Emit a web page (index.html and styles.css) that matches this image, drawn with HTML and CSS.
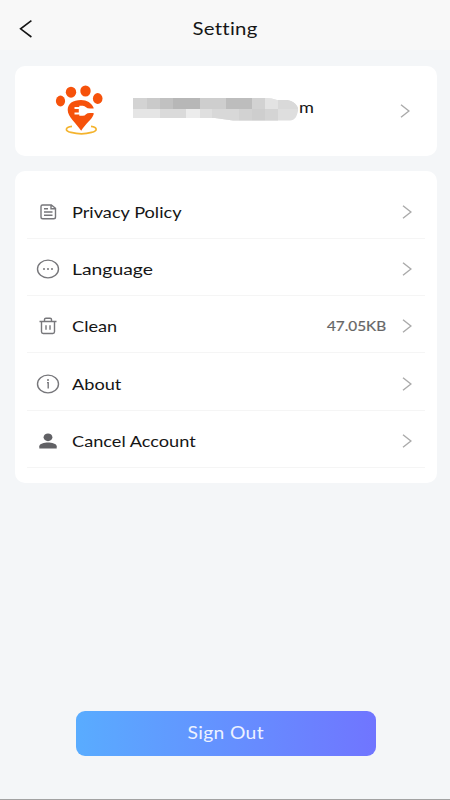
FILE: index.html
```html
<!DOCTYPE html>
<html lang="en">
<head>
<meta charset="utf-8">
<title>Setting</title>
<link rel="stylesheet" href="styles.css">
</head>
<body>
<header class="bar">
  <svg class="back" width="14" height="20" viewBox="0 0 14 20"><path d="M12.4 1.6 1.6 9.8l10.8 8.2"/></svg>
  <h1 class="title"><span class="wide">Setting</span></h1>
</header>
<main class="content">
  <section class="card profile">
    <svg class="logo" width="50" height="52" viewBox="0 0 50 52">
      <g fill="#f6520b">
        <ellipse cx="5.500" cy="16" rx="4.600" ry="5.400"/>
        <ellipse cx="16" cy="7.200" rx="5.200" ry="5.500"/>
        <ellipse cx="30.500" cy="6" rx="5.200" ry="5.500"/>
        <ellipse cx="42.700" cy="13.500" rx="4.800" ry="5.400"/>
        <path d="M26.200 45.800C21 38 12.700 31.500 12.700 25C12.700 18.500 18 15 26 15C32 15 36.500 18 38.600 22.800V29.500C37 34.500 30.500 38.500 26.200 45.800Z"/>
      </g>
      <path d="M19.500 22h4.800v-1.200h3.500q2 0 3.200 1.500q1.200 1.300 4 1.300h4.600v4.400H35q-2.800 0-4 1.200q-1.200 1.500-3.200 1.500h-3.500v-1.300h-4.800v-1.900h4.300v-3.500h-4.300z" fill="#fff"/>
      <path d="M17 41.300C10 42 9.500 46 16 47.400C22 49 31 49 36.500 47.400C43 46 42.500 42 36 41.300" fill="none" stroke="#f4b32d" stroke-width="1.700"/>
    </svg>
    <div class="account">
      <svg class="mask" width="166" height="24" viewBox="0 0 166 24">
        <clipPath id="smudge"><path d="M0 1H132Q139 1 144 3H154C161 4 166 9 165 14C164 19 162 23.500 157 23.500H100Q91 22 82 21H0Z"/></clipPath>
        <g clip-path="url(#smudge)">
          <path fill="#dedede" d="M0 0h166v24H0z"/>
          <path fill="#d3d3d3" d="M0 1h14v11H0z"/><path fill="#cacaca" d="M14 1h13v11H14z"/><path fill="#c1c1c1" d="M27 1h13v11H27z"/>
          <path fill="#b7b7b7" d="M40 1h27v11H40z"/><path fill="#cecece" d="M67 1h26v11H67z"/><path fill="#bdbdbd" d="M93 1h26v11H93z"/>
          <path fill="#d2d2d2" d="M119 1h13v11h-13z"/><path fill="#e3e3e3" d="M132 1h13v11h-13z"/><path fill="#d9d9d9" d="M145 1h21v11h-21z"/>
          <path fill="#e5e5e5" d="M0 12h27v9H0z"/><path fill="#dadada" d="M27 12h26v9H27z"/><path fill="#ececec" d="M53 12h14v9H53z"/>
          <path fill="#dfdfdf" d="M67 12h12v12H67z"/><path fill="#d8d8d8" d="M79 12h27v12H79z"/><path fill="#d2d2d2" d="M106 12h13v12h-13z"/>
          <path fill="#cecece" d="M119 12h13v12h-13z"/><path fill="#d4d4d4" d="M132 12h13v12h-13z"/>
        </g>
      </svg>
      <span class="tail wide">m</span>
    </div>
    <svg class="chevron" width="10" height="14" viewBox="0 0 10 14"><path d="m1 .8 7.900 6.200L1 13.200"/></svg>
  </section>

  <ul class="card menu">
    <li class="row">
      <svg class="icon" width="24" height="20" viewBox="0 0 24 20"><path d="M6.500 3h8.800l4.200 3.300V15q0 1.800-1.800 1.800H6.800Q5 16.800 5 15V4.500Q5 3 6.500 3zM15 3v3.700h4.500M8 6.800h4M8 10h8.500M8 13.200h8.500"/></svg>
      <span class="label"><span class="wide">Privacy Policy</span></span>
      <svg class="chevron" width="10" height="14" viewBox="0 0 10 14"><path d="m1 .8 7.900 6.200L1 13.200"/></svg>
    </li>
    <li class="row">
      <svg class="icon" width="24" height="20" viewBox="0 0 24 20"><ellipse cx="12" cy="10" rx="10.500" ry="8.900"/><path class="dots" d="M7 9.300h2v1.500H7zM11 9.300h2v1.500h-2zM15 9.300h2v1.500h-2z"/></svg>
      <span class="label"><span class="wide wider">Language</span></span>
      <svg class="chevron" width="10" height="14" viewBox="0 0 10 14"><path d="m1 .8 7.900 6.200L1 13.200"/></svg>
    </li>
    <li class="row">
      <svg class="icon" width="24" height="20" viewBox="0 0 24 20"><path d="M3.500 5.500h17M8.500 5.200V3.600q0-1.400 1.400-1.400h4.200q1.400 0 1.400 1.400v1.600M5.500 5.500v10.300q0 1.700 1.700 1.700h9.600q1.700 0 1.700-1.700V5.500M10 9.300v4.500M14 9.300v4.500"/></svg>
      <span class="label"><span class="wide">Clean</span></span>
      <span class="value"><span class="wide">47.05KB</span></span>
      <svg class="chevron" width="10" height="14" viewBox="0 0 10 14"><path d="m1 .8 7.900 6.200L1 13.200"/></svg>
    </li>
    <li class="row">
      <svg class="icon" width="24" height="20" viewBox="0 0 24 20"><ellipse cx="12" cy="10" rx="10.500" ry="8.900"/><path d="M11 8.600h1.200v5.800"/><circle class="dots" cx="12" cy="6" r="1"/></svg>
      <span class="label"><span class="wide">About</span></span>
      <svg class="chevron" width="10" height="14" viewBox="0 0 10 14"><path d="m1 .8 7.900 6.200L1 13.200"/></svg>
    </li>
    <li class="row">
      <svg class="icon" width="24" height="20" viewBox="0 0 24 20"><g class="solid"><ellipse cx="12" cy="6.300" rx="4.400" ry="3.900"/><path d="M3.300 17.400v-2.200c0-2.600 5-3.800 8.700-3.800s8.700 1.200 8.700 3.800v2.200z"/></g></svg>
      <span class="label"><span class="wide">Cancel Account</span></span>
      <svg class="chevron" width="10" height="14" viewBox="0 0 10 14"><path d="m1 .8 7.900 6.200L1 13.200"/></svg>
    </li>
  </ul>
  <button class="signout"><span class="wide">Sign Out</span></button>
</main>
</body>
</html>
```
FILE: styles.css
```css
* { box-sizing: border-box; }
body {
  margin: 0;
  height: 800px;
  display: flex;
  flex-direction: column;
  background: #f4f6f8;
  border-bottom: 1px solid #a2a2a2;
  font-family: Lato, "Liberation Sans", sans-serif;
  font-size: 16px;
  color: #161616;
  overflow: hidden;
}
.wide { display: inline-block; transform: scaleX(1.135); transform-origin: left center; }
.wide.wider { transform: scaleX(1.21); }
.bar {
  height: 50px;
  flex: none;
  display: grid;
  grid-template-columns: 1fr auto 1fr;
  align-items: center;
  padding: 7px 0 0 19px;
  background: #f8f8f8;
}
.back { fill: none; stroke: #151515; stroke-width: 1.6; }
.title { margin: 0 19px 0 0; font-size: 17px; font-weight: 400; line-height: 22px; }
.title .wide { transform: scaleX(1.2); transform-origin: center; letter-spacing: .2px; }
.content { flex: 1; display: flex; flex-direction: column; padding: 16px 13px 43px 15px; }
.card { background: #fff; border-radius: 10px; }
.profile { height: 90px; display: flex; align-items: center; padding: 0 27px 0 40px; }
.logo { margin-top: -1px; }
.account { flex: 1; display: flex; align-items: center; margin: -5px 0 0 28px; }
.tail { line-height: 20px; margin-top: -3px; font-size: 16px; }
.chevron { flex: none; fill: none; stroke: #aaa; stroke-width: 1.4; }
.menu { list-style: none; margin: 15px 0 0; padding: 10.5px 12px 13px; height: 312px; }
.row {
  height: 57.3px;
  display: flex;
  align-items: center;
  padding: 4px 13px 0 9px;
  border-bottom: 1px solid #f5f5f5;
}
.icon { fill: none; stroke: #77777b; stroke-width: 1.4; }
.icon .dots { fill: #77777b; stroke: none; }
.icon .solid { fill: #616165; stroke: none; }
.label { flex: 1; margin-left: 12px; line-height: 22px; }
.value { font-size: 13.5px; font-weight: 400; color: #666; margin-right: 16px; -webkit-text-stroke: .2px #666; }
.value .wide { transform-origin: right center; }
.signout {
  width: 300px;
  height: 45px;
  margin: auto auto 0 61px;
  padding: 0 0 2px;
  border: 0;
  border-radius: 9px;
  background: linear-gradient(90deg, #59acff, #7075ff);
  color: #edf2ff;
  font: 17px/22px Lato, "Liberation Sans", sans-serif;
}
.signout .wide { transform-origin: center; letter-spacing: .3px; }
```
